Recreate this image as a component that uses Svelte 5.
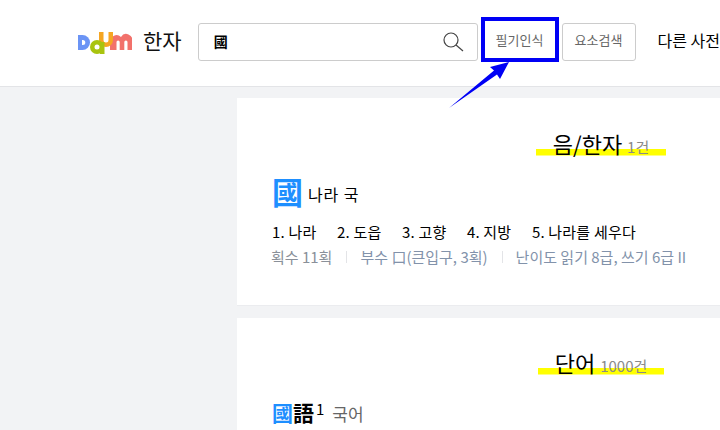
<script>
  const meanings = ['나라', '도읍', '고향', '지방', '나라를 세우다'];
</script>

<div class="page">
  <header class="top">
    <svg class="logo" width="54" height="22" viewBox="0 0 54 22" aria-label="Daum">
      <path d="M0 3h4.500a7.500 7.500 0 0 1 0 15H0z" fill="#6b94f5"/>
      <path d="M4 8h.8a2.500 2.500 0 0 1 0 5H4z" fill="#fff"/>
      <path d="M32 18V9.500A6.500 6.500 0 0 1 43 5a6 6 0 0 1 11 4.500V18h-4.500V10a1.600 1.600 0 0 0-3.200 0V18h-4.600V10a1.600 1.600 0 0 0-3.200 0V18z" fill="#f2716b"/>
      <path d="M21 0h4.500v8a2.500 2.500 0 0 0 5 0V0H35v8a7 7 0 0 1-14 0z" fill="#f5a623"/>
      <circle cx="19" cy="15" r="7" fill="#a9c40f"/>
      <rect x="22" y="10" width="4.500" height="12" fill="#a9c40f"/>
      <circle cx="19" cy="15" r="2.500" fill="#fff"/>
    </svg>
    <span class="title">한자</span>
    <div class="search">
      <span class="query">國</span>
      <svg width="21" height="20" viewBox="0 0 21 20" fill="none" stroke="#444" stroke-width="1.200">
        <circle cx="8" cy="8" r="7"/>
        <path d="M13 13l7 6"/>
      </svg>
    </div>
    <button class="tool first">필기인식</button>
    <button class="tool second">요소검색</button>
    <span class="other">다른 사전</span>
  </header>

  <main class="content">
    <section class="card one">
      <h2 class="heading"><span class="mark">음/한자 <small>1건</small></span></h2>
      <div class="entry">
        <span class="hanja">國</span>
        <span class="reading">나라 국</span>
      </div>
      <ol class="meanings">
        {#each meanings as m, i}
          <li>{i + 1}. {m}</li>
        {/each}
      </ol>
      <div class="meta">
        <span class="m a">획수 11획</span>
        <span class="m b">부수 口(큰입구, 3획)</span>
        <span class="m c">난이도 읽기 8급, 쓰기 6급 II</span>
      </div>
    </section>

    <section class="card two">
      <h2 class="heading"><span class="mark wide">단어 <small>1000건</small></span></h2>
      <div class="word">
        <span class="w"><b class="blue">國</b><b>語</b><sup>1</sup></span>
        <span class="gloss">국어</span>
      </div>
    </section>
  </main>

  <svg class="arrow" width="720" height="120" viewBox="0 0 720 120">
    <path d="M449 108L494 70.500L490 67L509 62L500 79L497 74.500Z" fill="#0000f5"/>
  </svg>
</div>

<style>
  :global(body) {
    margin: 0;
    overflow: hidden;
    background: #f2f3f5;
  }
  .page {
    position: relative;
    width: 720px;
    height: 430px;
    overflow: hidden;
    font-family: "Noto Sans CJK KR", "Noto Sans", sans-serif;
    color: #000;
  }
  .top {
    box-sizing: border-box;
    height: 87px;
    background: #fff;
    border-bottom: 1px solid #e3e4e7;
    display: flex;
    align-items: center;
    padding-left: 78px;
    white-space: nowrap;
    padding-bottom: 3px;
  }
  .logo {
    flex: none;
    margin-top: 2px;
  }
  .title {
    font-size: 21px;
    line-height: 30px;
    margin: -3px 0 0 11px;
    color: #111;
  }
  .search {
    box-sizing: border-box;
    width: 280px;
    height: 38px;
    margin-left: 16px;
    border: 1px solid #ccc;
    border-radius: 3px;
    display: flex;
    align-items: center;
    justify-content: space-between;
    padding: 0 13px 0 15px;
  }
  .query {
    font-size: 14px;
    font-weight: 700;
    margin-top: -2px;
  }
  .tool {
    box-sizing: border-box;
    height: 38px;
    width: 74px;
    padding: 0;
    background: #fff;
    border: 1px solid #ccc;
    border-radius: 3px;
    font: inherit;
    font-size: 13px;
    line-height: 18px;
    color: #666;
    flex: none;
  }
  .first {
    box-sizing: border-box;
    width: 78px;
    height: 45px;
    margin: 0 0 4px 3px;
    border: 4px solid #0000f5;
    border-radius: 0;
  }
  .second {
    margin-left: 3px;
    padding-bottom: 3px;
  }
  .other {
    font-size: 16px;
    margin: -4px 0 0 22px;
  }
  .content {
    padding: 11px 0 0 237px;
    display: flex;
    flex-direction: column;
    gap: 12px;
  }
  .card {
    box-sizing: border-box;
    width: 728px;
    background: #fff;
    border-bottom: 1px solid #ebecef;
  }
  .one {
    height: 208px;
    padding-top: 30px;
  }
  .two {
    height: 200px;
    padding-top: 29px;
  }
  .heading {
    margin: 0;
    text-align: center;
    font-size: 22px;
    font-weight: 400;
    line-height: 30px;
    height: 30px;
  }
  .mark {
    display: inline-block;
    width: 130px;
    background: linear-gradient(#ff0, #ff0) 0 21px / 100% 6.500px no-repeat;
  }
  .mark.wide {
    width: 126px;
  }
  small {
    font-size: 15px;
    color: #8a8a8a;
  }
  .entry {
    display: flex;
    align-items: center;
    margin: 15px 0 0 35px;
    height: 36px;
  }
  .hanja {
    font-size: 31px;
    line-height: 36px;
    color: #1e8fff;
    font-weight: 700;
  }
  .reading {
    font-size: 16px;
    letter-spacing: 0.9px;
    margin: 6px 0 0 5px;
  }
  .meanings {
    list-style: none;
    display: flex;
    gap: 20.500px;
    margin: 12px 0 0 35px;
    padding: 0;
    font-size: 15px;
    line-height: 22px;
    letter-spacing: 0.2px;
  }
  .meta {
    display: flex;
    margin: 4px 0 0 34px;
    font-size: 15px;
    line-height: 20px;
    color: #8292aa;
  }
  .m + .m {
    margin-left: 14px;
    padding-left: 14px;
    background: linear-gradient(#e3e4e7, #e3e4e7) 0 4px / 1px 12px no-repeat;
  }
  .a {
    color: #8a9099;
  }
  .word {
    display: flex;
    align-items: baseline;
    margin: 21px 0 0 35px;
  }
  .w {
    font-size: 21px;
    line-height: 28px;
  }
  .blue {
    color: #1e8fff;
  }
  .w b {
    font-weight: 700;
  }
  sup {
    font-size: 15px;
    line-height: 0;
    vertical-align: 6px;
    margin-left: 2px;
  }
  .gloss {
    font-size: 17px;
    color: #666;
    margin-left: 8px;
  }
  .arrow {
    position: absolute;
    left: 0;
    top: 0;
    pointer-events: none;
  }
</style>
